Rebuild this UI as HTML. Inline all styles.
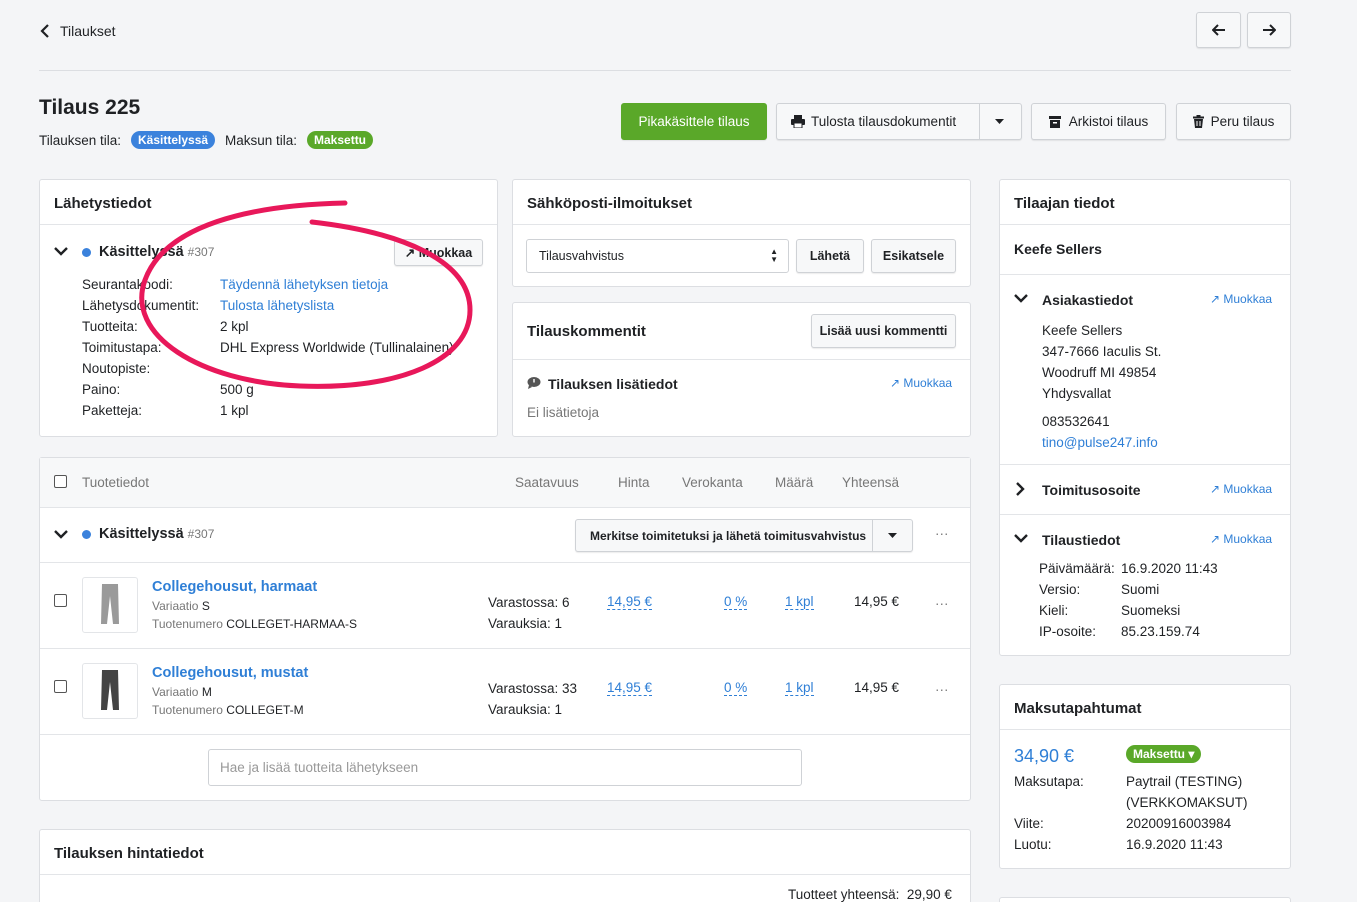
<!DOCTYPE html>
<html><head><meta charset="utf-8"><style>
*{box-sizing:border-box;margin:0;padding:0}
html,body{width:1357px;height:902px;overflow:hidden}
body{background:#f4f5f7;font-family:"Liberation Sans",sans-serif;color:#1f2124;font-size:13.5px;position:relative}
.a{position:absolute;white-space:nowrap}
.card{position:absolute;background:#fff;border:1px solid #dcdee2;border-radius:3px}
.hr{position:absolute;height:1px;background:#e3e5e8}
.btn{position:absolute;background:#f7f8f9;border:1px solid #cfd2d6;border-radius:3px;box-shadow:0 1px 1px rgba(0,0,0,.08);display:flex;align-items:center;justify-content:center;font-size:13.5px;color:#1f2124}
.h{font-size:15px;font-weight:bold}
.lnk{color:#2f7fd6}
.g{color:#777}
.badge{position:absolute;color:#fff;border-radius:10px;font-size:12px;font-weight:bold;padding:2px 7px;line-height:14px}
.cb{position:absolute;width:13px;height:13px;border:1px solid #555;border-radius:2px;background:#fff}
.dot{position:absolute;width:9px;height:9px;border-radius:50%;background:#3b82dc}
.ul{border-bottom:1px dashed #2f7fd6}
.small{font-size:12px}
svg.c{position:absolute}
</style></head><body>
<!-- top -->
<svg class="c" style="left:40px;top:24px" width="10" height="14"><path d="M8 1L2 7l6 6" fill="none" stroke="#1f2124" stroke-width="2.2"/></svg>
<div class="a" style="left:60px;top:23px;font-size:14px">Tilaukset</div>
<div class="btn" style="left:1196px;top:12px;width:45px;height:36px"><svg width="14" height="12"><path d="M13 6H2M6 1L1 6l5 5" fill="none" stroke="#1f2124" stroke-width="2"/></svg></div>
<div class="btn" style="left:1247px;top:12px;width:44px;height:36px"><svg width="14" height="12"><path d="M1 6h11M8 1l5 5-5 5" fill="none" stroke="#1f2124" stroke-width="2"/></svg></div>
<div class="hr" style="left:39px;top:70px;width:1252px;background:#dcdee2"></div>

<div class="a" style="left:39px;top:96px;font-size:21px;font-weight:bold">Tilaus 225</div>
<div class="a" style="left:39px;top:133px">Tilauksen tila:</div>
<div class="badge" style="left:131px;top:131px;background:#3b82dc">Käsittelyssä</div>
<div class="a" style="left:225px;top:133px">Maksun tila:</div>
<div class="badge" style="left:307px;top:131px;background:#5aa829">Maksettu</div>

<div class="btn" style="left:621px;top:103px;width:146px;height:37px;background:#5aa829;border-color:#5aa829;color:#fff">Pikakäsittele tilaus</div>
<div class="btn" style="left:776px;top:103px;width:246px;height:37px;justify-content:flex-start;padding-left:14px"><svg width="14" height="13" style="margin-right:6px"><rect x="3" y="0" width="8" height="4" fill="#1f2124"/><rect x="0" y="4" width="14" height="6" rx="1" fill="#1f2124"/><rect x="3" y="8" width="8" height="5" fill="#fff" stroke="#1f2124"/></svg>Tulosta tilausdokumentit</div>
<div class="a" style="left:979px;top:104px;width:1px;height:35px;background:#cfd2d6"></div>
<svg class="c" style="left:995px;top:119px" width="9" height="5"><path d="M0 0h9L4.5 5z" fill="#1f2124"/></svg>
<div class="btn" style="left:1031px;top:103px;width:135px;height:37px"><svg width="12" height="12" style="margin-right:8px"><rect x="0" y="0" width="12" height="3" fill="#1f2124"/><rect x="1" y="4" width="10" height="8" fill="#1f2124"/><rect x="4" y="6" width="4" height="1.5" fill="#fff"/></svg>Arkistoi tilaus</div>
<div class="btn" style="left:1176px;top:103px;width:115px;height:37px"><svg width="11" height="13" style="margin-right:7px"><rect x="0" y="1.5" width="11" height="2" fill="#1f2124"/><rect x="3.5" y="0" width="4" height="2" fill="#1f2124"/><path d="M1 4h9l-1 9H2z" fill="#1f2124"/><path d="M4 6v5M7 6v5" stroke="#fff"/></svg>Peru tilaus</div>

<!-- Lähetystiedot -->
<div class="card" style="left:39px;top:179px;width:459px;height:258px"></div>
<div class="a h" style="left:54px;top:195px">Lähetystiedot</div>
<div class="hr" style="left:40px;top:224px;width:457px"></div>
<svg class="c" style="left:54px;top:247px" width="14" height="9"><path d="M1 1l6 6 6-6" fill="none" stroke="#1f2124" stroke-width="2.4"/></svg>
<div class="dot" style="left:82px;top:248px"></div>
<div class="a" style="left:99px;top:244px;font-size:14.5px;font-weight:bold">Käsittelyssä <span class="g small" style="font-weight:normal">#307</span></div>
<div class="btn" style="left:394px;top:239px;width:89px;height:27px;font-size:12.5px;font-weight:bold">&#x2197; Muokkaa</div>
<div class="a" style="left:82px;top:274px;line-height:21px">Seurantakoodi:<br>Lähetysdokumentit:<br>Tuotteita:<br>Toimitustapa:<br>Noutopiste:<br>Paino:<br>Paketteja:</div>
<div class="a" style="left:220px;top:274px;line-height:21px"><span class="lnk">Täydennä lähetyksen tietoja</span><br><span class="lnk">Tulosta lähetyslista</span><br>2 kpl<br>DHL Express Worldwide (Tullinalainen)<br>&nbsp;<br>500 g<br>1 kpl</div>

<!-- Sähköposti -->
<div class="card" style="left:512px;top:179px;width:459px;height:108px"></div>
<div class="a h" style="left:527px;top:195px">Sähköposti-ilmoitukset</div>
<div class="hr" style="left:513px;top:224px;width:457px"></div>
<div class="a" style="left:526px;top:239px;width:263px;height:34px;border:1px solid #cfd2d6;border-radius:3px;background:#fff;font-size:12.5px;padding:9px 12px">Tilausvahvistus<span style="position:absolute;right:10px;top:8px;font-size:8px;line-height:8px">&#9650;<br>&#9660;</span></div>
<div class="btn" style="left:796px;top:239px;width:68px;height:34px;font-size:12.5px;font-weight:bold">Lähetä</div>
<div class="btn" style="left:871px;top:239px;width:85px;height:34px;font-size:12.5px;font-weight:bold">Esikatsele</div>

<!-- Tilauskommentit -->
<div class="card" style="left:512px;top:302px;width:459px;height:135px"></div>
<div class="a h" style="left:527px;top:323px">Tilauskommentit</div>
<div class="btn" style="left:811px;top:314px;width:145px;height:34px;font-size:12.5px;font-weight:bold">Lisää uusi kommentti</div>
<div class="hr" style="left:513px;top:359px;width:457px"></div>
<svg class="c" style="left:527px;top:376px" width="14" height="13"><ellipse cx="7" cy="6" rx="6.5" ry="5" fill="#555"/><path d="M2 9l-1 4 4-2z" fill="#555"/><rect x="6.3" y="3" width="1.4" height="3.5" fill="#fff"/></svg>
<div class="a" style="left:548px;top:376px;font-weight:bold;font-size:14px">Tilauksen lisätiedot</div>
<div class="a lnk small" style="left:890px;top:376px">&#x2197; Muokkaa</div>
<div class="a g" style="left:527px;top:405px">Ei lisätietoja</div>

<!-- products -->
<div class="card" style="left:39px;top:457px;width:932px;height:344px"></div>
<div class="a" style="left:40px;top:458px;width:930px;height:49px;background:#f7f8f9"></div>
<div class="cb" style="left:54px;top:475px"></div>
<div class="a g" style="left:82px;top:475px">Tuotetiedot</div>
<div class="a g" style="left:515px;top:475px">Saatavuus</div>
<div class="a g" style="left:618px;top:475px">Hinta</div>
<div class="a g" style="left:682px;top:475px">Verokanta</div>
<div class="a g" style="left:775px;top:475px">Määrä</div>
<div class="a g" style="left:842px;top:475px">Yhteensä</div>
<div class="hr" style="left:40px;top:507px;width:930px"></div>
<svg class="c" style="left:54px;top:530px" width="14" height="9"><path d="M1 1l6 6 6-6" fill="none" stroke="#1f2124" stroke-width="2.4"/></svg>
<div class="dot" style="left:82px;top:530px"></div>
<div class="a" style="left:99px;top:526px;font-size:14.5px;font-weight:bold">Käsittelyssä <span class="g small" style="font-weight:normal">#307</span></div>
<div class="btn" style="left:575px;top:519px;width:338px;height:33px;font-size:12px;font-weight:bold;justify-content:flex-start;padding-left:14px">Merkitse toimitetuksi ja lähetä toimitusvahvistus</div>
<div class="a" style="left:872px;top:520px;width:1px;height:31px;background:#cfd2d6"></div>
<svg class="c" style="left:888px;top:533px" width="9" height="5"><path d="M0 0h9L4.5 5z" fill="#1f2124"/></svg>
<div class="a g" style="left:935px;top:526px">&middot;&middot;&middot;</div>
<div class="hr" style="left:40px;top:562px;width:930px"></div>

<div class="cb" style="left:54px;top:594px"></div>
<div class="a" style="left:82px;top:577px;width:56px;height:56px;border:1px solid #e3e5e8;border-radius:3px;background:#fff"><svg width="54" height="54"><path d="M19 6h16l1 40h-6l-3-28-3 28h-6z" fill="#9a9a9a"/></svg></div>
<div class="a lnk" style="left:152px;top:579px;font-size:14.5px;font-weight:bold">Collegehousut, harmaat</div>
<div class="a small" style="left:152px;top:599px"><span class="g">Variaatio</span> S</div>
<div class="a small" style="left:152px;top:617px"><span class="g">Tuotenumero</span> COLLEGET-HARMAA-S</div>
<div class="a" style="left:488px;top:592px;line-height:21px">Varastossa: 6<br>Varauksia: 1</div>
<div class="a lnk" style="left:607px;top:594px"><span class="ul">14,95 €</span></div>
<div class="a lnk" style="left:724px;top:594px"><span class="ul">0 %</span></div>
<div class="a lnk" style="left:785px;top:594px"><span class="ul">1 kpl</span></div>
<div class="a" style="left:854px;top:594px">14,95 €</div>
<div class="a g" style="left:935px;top:596px">&middot;&middot;&middot;</div>
<div class="hr" style="left:40px;top:648px;width:930px"></div>

<div class="cb" style="left:54px;top:680px"></div>
<div class="a" style="left:82px;top:663px;width:56px;height:56px;border:1px solid #e3e5e8;border-radius:3px;background:#fff"><svg width="54" height="54"><path d="M19 6h16l1 40h-6l-3-28-3 28h-6z" fill="#444"/></svg></div>
<div class="a lnk" style="left:152px;top:665px;font-size:14.5px;font-weight:bold">Collegehousut, mustat</div>
<div class="a small" style="left:152px;top:685px"><span class="g">Variaatio</span> M</div>
<div class="a small" style="left:152px;top:703px"><span class="g">Tuotenumero</span> COLLEGET-M</div>
<div class="a" style="left:488px;top:678px;line-height:21px">Varastossa: 33<br>Varauksia: 1</div>
<div class="a lnk" style="left:607px;top:680px"><span class="ul">14,95 €</span></div>
<div class="a lnk" style="left:724px;top:680px"><span class="ul">0 %</span></div>
<div class="a lnk" style="left:785px;top:680px"><span class="ul">1 kpl</span></div>
<div class="a" style="left:854px;top:680px">14,95 €</div>
<div class="a g" style="left:935px;top:682px">&middot;&middot;&middot;</div>
<div class="hr" style="left:40px;top:734px;width:930px"></div>
<div class="a" style="left:208px;top:749px;width:594px;height:37px;border:1px solid #cfd2d6;border-radius:3px;background:#fff;padding:10px 11px;color:#999">Hae ja lisää tuotteita lähetykseen</div>

<!-- hintatiedot -->
<div class="card" style="left:39px;top:829px;width:932px;height:90px"></div>
<div class="a h" style="left:54px;top:845px">Tilauksen hintatiedot</div>
<div class="hr" style="left:40px;top:874px;width:930px"></div>
<div class="a" style="left:788px;top:887px">Tuotteet yhteensä:&nbsp; 29,90 €</div>

<!-- Tilaajan tiedot -->
<div class="card" style="left:999px;top:179px;width:292px;height:477px"></div>
<div class="a h" style="left:1014px;top:195px">Tilaajan tiedot</div>
<div class="hr" style="left:1000px;top:224px;width:290px"></div>
<div class="a" style="left:1014px;top:241px;font-weight:bold;font-size:14px">Keefe Sellers</div>
<div class="hr" style="left:1000px;top:274px;width:290px"></div>
<svg class="c" style="left:1014px;top:294px" width="14" height="9"><path d="M1 1l6 6 6-6" fill="none" stroke="#1f2124" stroke-width="2.4"/></svg>
<div class="a" style="left:1042px;top:292px;font-weight:bold;font-size:14px">Asiakastiedot</div>
<div class="a lnk small" style="left:1210px;top:292px">&#x2197; Muokkaa</div>
<div class="a" style="left:1042px;top:320px;line-height:21px">Keefe Sellers<br>347-7666 Iaculis St.<br>Woodruff MI 49854<br>Yhdysvallat</div>
<div class="a" style="left:1042px;top:411px;line-height:21px">083532641<br><span class="lnk">tino@pulse247.info</span></div>
<div class="hr" style="left:1000px;top:464px;width:290px"></div>
<svg class="c" style="left:1016px;top:482px" width="9" height="14"><path d="M1 1l6 6-6 6" fill="none" stroke="#1f2124" stroke-width="2.4"/></svg>
<div class="a" style="left:1042px;top:482px;font-weight:bold;font-size:14px">Toimitusosoite</div>
<div class="a lnk small" style="left:1210px;top:482px">&#x2197; Muokkaa</div>
<div class="hr" style="left:1000px;top:514px;width:290px"></div>
<svg class="c" style="left:1014px;top:534px" width="14" height="9"><path d="M1 1l6 6 6-6" fill="none" stroke="#1f2124" stroke-width="2.4"/></svg>
<div class="a" style="left:1042px;top:532px;font-weight:bold;font-size:14px">Tilaustiedot</div>
<div class="a lnk small" style="left:1210px;top:532px">&#x2197; Muokkaa</div>
<div class="a" style="left:1039px;top:558px;line-height:21px">Päivämäärä:<br>Versio:<br>Kieli:<br>IP-osoite:</div>
<div class="a" style="left:1121px;top:558px;line-height:21px">16.9.2020 11:43<br>Suomi<br>Suomeksi<br>85.23.159.74</div>

<!-- Maksutapahtumat -->
<div class="card" style="left:999px;top:684px;width:292px;height:185px"></div>
<div class="a h" style="left:1014px;top:700px">Maksutapahtumat</div>
<div class="hr" style="left:1000px;top:729px;width:290px"></div>
<div class="a lnk" style="left:1014px;top:746px;font-size:18px">34,90 €</div>
<div class="badge" style="left:1126px;top:745px;background:#5aa829">Maksettu &#9662;</div>
<div class="a" style="left:1014px;top:771px;line-height:21px">Maksutapa:<br><br>Viite:<br>Luotu:</div>
<div class="a" style="left:1126px;top:771px;line-height:21px">Paytrail (TESTING)<br>(VERKKOMAKSUT)<br>20200916003984<br>16.9.2020 11:43</div>
<div class="card" style="left:999px;top:897px;width:292px;height:20px"></div>

<!-- red annotation -->
<svg class="a" style="left:0;top:0" width="1357" height="902">
<path d="M345 203 C 250 205, 165 225, 145 280 C 125 335, 200 382, 300 386 C 400 390, 470 360, 470 310 C 470 260, 400 232, 312 222" fill="none" stroke="#e8185a" stroke-width="5" stroke-linecap="round"/>
</svg>
</body></html>
